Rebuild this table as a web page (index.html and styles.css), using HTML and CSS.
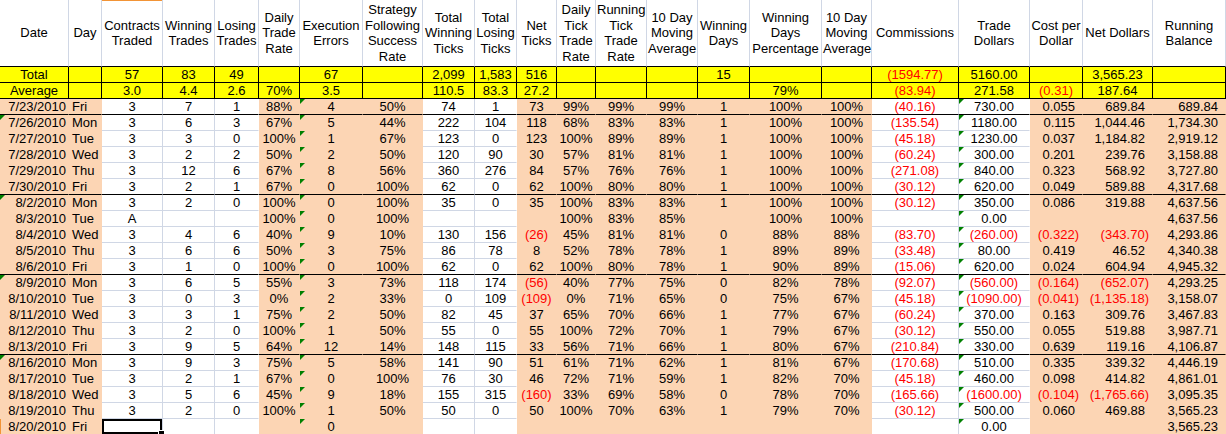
FILE: index.html
```html
<!DOCTYPE html>
<html>
<head>
<meta charset="utf-8">
<title>Trading Log</title>
<link rel="stylesheet" href="styles.css">
</head>
<body>
<table class="sheet">
<colgroup>
<col style="width:69px"><col style="width:33px"><col style="width:61px"><col style="width:52px"><col style="width:44px"><col style="width:41px"><col style="width:63px"><col style="width:60px"><col style="width:52px"><col style="width:42px"><col style="width:40px"><col style="width:39px"><col style="width:51px"><col style="width:51px"><col style="width:52px"><col style="width:72px"><col style="width:50px"><col style="width:87px"><col style="width:71px"><col style="width:53px"><col style="width:70px"><col style="width:73px">
</colgroup>
<thead>
<tr>
<th>Date</th><th>Day</th><th class="selcol">Contracts Traded</th><th>Winning Trades</th><th>Losing Trades</th><th>Daily Trade Rate</th><th>Execution Errors</th><th>Strategy Following Success Rate</th><th>Total Winning Ticks</th><th>Total Losing Ticks</th><th>Net Ticks</th><th>Daily Tick Trade Rate</th><th>Running Tick Trade Rate</th><th>10 Day Moving Average</th><th>Winning Days</th><th>Winning Days Percentage</th><th>10 Day Moving Average</th><th>Commissions</th><th>Trade Dollars</th><th>Cost per Dollar</th><th>Net Dollars</th><th>Running Balance</th>
</tr>
</thead>
<tbody>
<tr class="tot"><td>Total</td><td></td><td>57</td><td>83</td><td>49</td><td></td><td>67</td><td></td><td>2,099</td><td>1,583</td><td>516</td><td></td><td></td><td></td><td>15</td><td></td><td></td><td class="neg">(1594.77)</td><td>5160.00</td><td></td><td>3,565.23</td><td></td></tr>
<tr class="tot"><td>Average</td><td></td><td>3.0</td><td>4.4</td><td>2.6</td><td>70%</td><td>3.5</td><td></td><td>110.5</td><td>83.3</td><td>27.2</td><td></td><td></td><td></td><td></td><td>79%</td><td></td><td class="neg">(83.94)</td><td>271.58</td><td class="neg">(0.31)</td><td>187.64</td><td></td></tr>

<tr class="day wk"><td>7/23/2010</td><td>Fri</td><td>3</td><td>7</td><td>1</td><td>88%</td><td class="g">4</td><td>50%</td><td>74</td><td>1</td><td>73</td><td>99%</td><td>99%</td><td>99%</td><td>1</td><td>100%</td><td>100%</td><td class="neg">(40.16)</td><td class="g">730.00</td><td>0.055</td><td>689.84</td><td>689.84</td></tr>
<tr class="day"><td class="g">7/26/2010</td><td>Mon</td><td>3</td><td>6</td><td>3</td><td>67%</td><td class="g">5</td><td>44%</td><td>222</td><td>104</td><td>118</td><td>68%</td><td>83%</td><td>83%</td><td>1</td><td>100%</td><td>100%</td><td class="neg">(135.54)</td><td class="g">1180.00</td><td>0.115</td><td>1,044.46</td><td>1,734.30</td></tr>
<tr class="day"><td>7/27/2010</td><td>Tue</td><td>3</td><td>3</td><td>0</td><td>100%</td><td class="g">1</td><td>67%</td><td>123</td><td>0</td><td>123</td><td>100%</td><td>89%</td><td>89%</td><td>1</td><td>100%</td><td>100%</td><td class="neg">(45.18)</td><td class="g">1230.00</td><td>0.037</td><td>1,184.82</td><td>2,919.12</td></tr>
<tr class="day"><td>7/28/2010</td><td>Wed</td><td>3</td><td>2</td><td>2</td><td>50%</td><td class="g">2</td><td>50%</td><td>120</td><td>90</td><td>30</td><td>57%</td><td>81%</td><td>81%</td><td>1</td><td>100%</td><td>100%</td><td class="neg">(60.24)</td><td class="g">300.00</td><td>0.201</td><td>239.76</td><td>3,158.88</td></tr>
<tr class="day"><td>7/29/2010</td><td>Thu</td><td>3</td><td>12</td><td>6</td><td>67%</td><td class="g">8</td><td>56%</td><td>360</td><td>276</td><td>84</td><td>57%</td><td>76%</td><td>76%</td><td>1</td><td>100%</td><td>100%</td><td class="neg">(271.08)</td><td class="g">840.00</td><td>0.323</td><td>568.92</td><td>3,727.80</td></tr>
<tr class="day wk"><td>7/30/2010</td><td>Fri</td><td>3</td><td>2</td><td>1</td><td>67%</td><td class="g">0</td><td>100%</td><td>62</td><td>0</td><td>62</td><td>100%</td><td>80%</td><td>80%</td><td>1</td><td>100%</td><td>100%</td><td class="neg">(30.12)</td><td class="g">620.00</td><td>0.049</td><td>589.88</td><td>4,317.68</td></tr>

<tr class="day"><td class="g">8/2/2010</td><td>Mon</td><td>3</td><td>2</td><td>0</td><td>100%</td><td class="g">0</td><td>100%</td><td>35</td><td>0</td><td>35</td><td>100%</td><td>83%</td><td>83%</td><td>1</td><td>100%</td><td>100%</td><td class="neg">(30.12)</td><td class="g">350.00</td><td>0.086</td><td>319.88</td><td>4,637.56</td></tr>
<tr class="day"><td>8/3/2010</td><td>Tue</td><td>A</td><td></td><td></td><td>100%</td><td class="g">0</td><td>100%</td><td></td><td></td><td></td><td>100%</td><td>83%</td><td>85%</td><td></td><td>100%</td><td>100%</td><td></td><td class="g">0.00</td><td></td><td></td><td>4,637.56</td></tr>
<tr class="day"><td>8/4/2010</td><td>Wed</td><td>3</td><td>4</td><td>6</td><td>40%</td><td class="g">9</td><td>10%</td><td>130</td><td>156</td><td class="neg">(26)</td><td>45%</td><td>81%</td><td>81%</td><td>0</td><td>88%</td><td>88%</td><td class="neg">(83.70)</td><td class="g neg">(260.00)</td><td class="neg">(0.322)</td><td class="neg">(343.70)</td><td>4,293.86</td></tr>
<tr class="day"><td>8/5/2010</td><td>Thu</td><td>3</td><td>6</td><td>6</td><td>50%</td><td class="g">3</td><td>75%</td><td>86</td><td>78</td><td>8</td><td>52%</td><td>78%</td><td>78%</td><td>1</td><td>89%</td><td>89%</td><td class="neg">(33.48)</td><td class="g">80.00</td><td>0.419</td><td>46.52</td><td>4,340.38</td></tr>
<tr class="day wk"><td>8/6/2010</td><td>Fri</td><td>3</td><td>1</td><td>0</td><td>100%</td><td class="g">0</td><td>100%</td><td>62</td><td>0</td><td>62</td><td>100%</td><td>80%</td><td>78%</td><td>1</td><td>90%</td><td>89%</td><td class="neg">(15.06)</td><td class="g">620.00</td><td>0.024</td><td>604.94</td><td>4,945.32</td></tr>

<tr class="day"><td class="g">8/9/2010</td><td>Mon</td><td>3</td><td>6</td><td>5</td><td>55%</td><td class="g">3</td><td>73%</td><td>118</td><td>174</td><td class="neg">(56)</td><td>40%</td><td>77%</td><td>75%</td><td>0</td><td>82%</td><td>78%</td><td class="neg">(92.07)</td><td class="g neg">(560.00)</td><td class="neg">(0.164)</td><td class="neg">(652.07)</td><td>4,293.25</td></tr>
<tr class="day"><td>8/10/2010</td><td>Tue</td><td>3</td><td>0</td><td>3</td><td>0%</td><td class="g">2</td><td>33%</td><td>0</td><td>109</td><td class="neg">(109)</td><td>0%</td><td>71%</td><td>65%</td><td>0</td><td>75%</td><td>67%</td><td class="neg">(45.18)</td><td class="g neg">(1090.00)</td><td class="neg">(0.041)</td><td class="neg">(1,135.18)</td><td>3,158.07</td></tr>
<tr class="day"><td>8/11/2010</td><td>Wed</td><td>3</td><td>3</td><td>1</td><td>75%</td><td class="g">2</td><td>50%</td><td>82</td><td>45</td><td>37</td><td>65%</td><td>70%</td><td>66%</td><td>1</td><td>77%</td><td>67%</td><td class="neg">(60.24)</td><td class="g">370.00</td><td>0.163</td><td>309.76</td><td>3,467.83</td></tr>
<tr class="day"><td>8/12/2010</td><td>Thu</td><td>3</td><td>2</td><td>0</td><td>100%</td><td class="g">1</td><td>50%</td><td>55</td><td>0</td><td>55</td><td>100%</td><td>72%</td><td>70%</td><td>1</td><td>79%</td><td>67%</td><td class="neg">(30.12)</td><td class="g">550.00</td><td>0.055</td><td>519.88</td><td>3,987.71</td></tr>
<tr class="day wk"><td>8/13/2010</td><td>Fri</td><td>3</td><td>9</td><td>5</td><td>64%</td><td class="g">12</td><td>14%</td><td>148</td><td>115</td><td>33</td><td>56%</td><td>71%</td><td>66%</td><td>1</td><td>80%</td><td>67%</td><td class="neg">(210.84)</td><td class="g">330.00</td><td>0.639</td><td>119.16</td><td>4,106.87</td></tr>

<tr class="day"><td class="g">8/16/2010</td><td>Mon</td><td>3</td><td>9</td><td>3</td><td>75%</td><td class="g">5</td><td>58%</td><td>141</td><td>90</td><td>51</td><td>61%</td><td>71%</td><td>62%</td><td>1</td><td>81%</td><td>67%</td><td class="neg">(170.68)</td><td class="g">510.00</td><td>0.335</td><td>339.32</td><td>4,446.19</td></tr>
<tr class="day"><td>8/17/2010</td><td>Tue</td><td>3</td><td>2</td><td>1</td><td>67%</td><td class="g">0</td><td>100%</td><td>76</td><td>30</td><td>46</td><td>72%</td><td>71%</td><td>59%</td><td>1</td><td>82%</td><td>70%</td><td class="neg">(45.18)</td><td class="g">460.00</td><td>0.098</td><td>414.82</td><td>4,861.01</td></tr>
<tr class="day"><td>8/18/2010</td><td>Wed</td><td>3</td><td>5</td><td>6</td><td>45%</td><td class="g">9</td><td>18%</td><td>155</td><td>315</td><td class="neg">(160)</td><td>33%</td><td>69%</td><td>58%</td><td>0</td><td>78%</td><td>70%</td><td class="neg">(165.66)</td><td class="g neg">(1600.00)</td><td class="neg">(0.104)</td><td class="neg">(1,765.66)</td><td>3,095.35</td></tr>
<tr class="day"><td>8/19/2010</td><td>Thu</td><td>3</td><td>2</td><td>0</td><td>100%</td><td class="g">1</td><td>50%</td><td>50</td><td>0</td><td>50</td><td>100%</td><td>70%</td><td>63%</td><td>1</td><td>79%</td><td>70%</td><td class="neg">(30.12)</td><td class="g">500.00</td><td>0.060</td><td>469.88</td><td>3,565.23</td></tr>
<tr class="day"><td class="selrow">8/20/2010</td><td>Fri</td><td class="active"></td><td></td><td></td><td></td><td class="g">0</td><td></td><td></td><td></td><td></td><td></td><td></td><td></td><td></td><td></td><td></td><td></td><td class="g">0.00</td><td></td><td></td><td>3,565.23</td></tr>
</tbody>
</table>
</body>
</html>
```
FILE: styles.css
```css
* {
  box-sizing: border-box;
}

body {
  margin: 0;
  background: #ffffff;
  overflow: hidden;
  font-family: "Liberation Sans", Arial, sans-serif;
  font-size: 13px;
  color: #000000;
}

.sheet {
  border-collapse: separate;
  border-spacing: 0;
  table-layout: fixed;
  width: 1226px;
}

.sheet th,
.sheet td {
  padding: 0 1px;
  text-align: center;
  vertical-align: middle;
  font-weight: normal;
  border-right: 1px solid transparent;
  border-bottom: 1px solid transparent;
  position: relative;
}

.sheet th {
  height: 67px;
  line-height: 15.5px;
  white-space: normal;
  background: #ffffff;
  border-right-color: #d0d7e5;
  border-bottom-color: #000000;
}

.sheet th.selcol {
  box-shadow: inset 0 1px 0 #f29436;
}

.sheet td {
  height: 16px;
  line-height: 15px;
  white-space: nowrap;
  overflow: hidden;
}

/* Total / Average rows */
.tot td {
  background: #ffff00;
  border-right-color: #000000;
  border-bottom-color: #000000;
}

/* Daily rows */
.day td {
  background: #fcd5b4;
}

.day td:nth-child(3),
.day td:nth-child(4),
.day td:nth-child(5),
.day td:nth-child(9),
.day td:nth-child(10),
.day td:nth-child(18),
.day td:nth-child(19) {
  background: #ffffff;
  border-bottom-color: #d0d7e5;
}

.day td:nth-child(3),
.day td:nth-child(4),
.day td:nth-child(9),
.day td:nth-child(18) {
  border-right-color: #d0d7e5;
}

.day.wk td {
  border-bottom-color: #000000;
}

.day td:nth-child(1) {
  text-align: right;
  padding-right: 2px;
}

.day td:nth-child(2) {
  text-align: left;
  padding-left: 3px;
}

.day td:nth-child(n+20) {
  text-align: right;
  padding-right: 7px;
}

.day td.neg:nth-child(n+20) {
  padding-right: 3px;
}

.neg {
  color: #ff0000;
}

/* green error indicator triangle */
.g::before {
  content: "";
  position: absolute;
  left: 0;
  top: 0;
  width: 0;
  height: 0;
  border-top: 5px solid #008000;
  border-right: 5px solid transparent;
}

.day td.active {
  overflow: visible;
  box-shadow: inset 0 0 0 2px #000000;
}

.day td.active::after {
  content: "";
  position: absolute;
  right: -3px;
  bottom: -3px;
  width: 5px;
  height: 5px;
  background: #000000;
  border: 1px solid #ffffff;
  z-index: 2;
}

.day td.selrow {
  box-shadow: inset 1px 0 0 #f29436;
}
```
